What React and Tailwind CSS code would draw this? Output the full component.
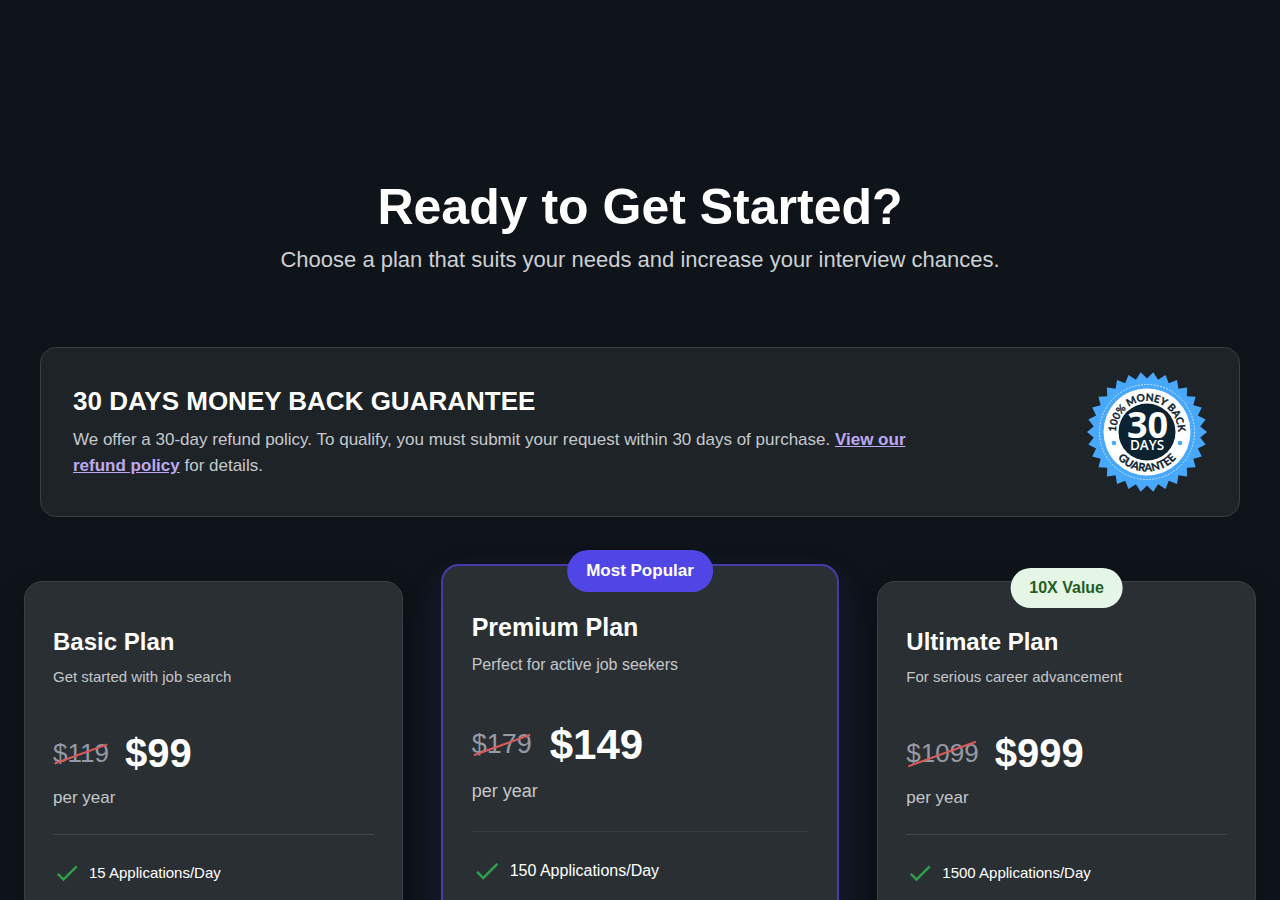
import clsx from "clsx";

const plans = [
  {
    name: "Basic Plan",
    description: "Get started with job search",
    oldPrice: "$119",
    price: "$99",
    features: ["15 Applications/Day"],
  },
  {
    name: "Premium Plan",
    description: "Perfect for active job seekers",
    oldPrice: "$179",
    price: "$149",
    features: ["150 Applications/Day"],
    badge: "Most Popular",
    featured: true,
  },
  {
    name: "Ultimate Plan",
    description: "For serious career advancement",
    oldPrice: "$1099",
    price: "$999",
    features: ["1500 Applications/Day"],
    badge: "10X Value",
  },
];

// 30 teeth, alternating outer and inner radius
const sealPoints = Array.from({ length: 60 }, (_, i) => {
  const radius = i % 2 === 0 ? 60 : 53.5;
  const angle = ((6 + i * 6) * Math.PI) / 180;
  const x = 60 + radius * Math.sin(angle);
  const y = 60 - radius * Math.cos(angle);
  return `${x.toFixed(2)},${y.toFixed(2)}`;
}).join(" ");

const GuaranteeSeal = () => (
  <svg
    viewBox="0 0 120 120"
    className="h-30 w-30 shrink-0"
    role="img"
    aria-label="30 days, 100% money back guarantee"
  >
    <defs>
      <path id="seal-top" d="M 29 60 A 31 31 0 0 1 91 60" />
      <path id="seal-bottom" d="M 20.5 60 A 39.5 39.5 0 0 0 99.5 60" />
    </defs>
    <polygon points={sealPoints} fill="#48a8fb" />
    <circle cx="60" cy="60" r="47.5" fill="none" stroke="#d9eeff" strokeWidth="0.9" strokeDasharray="1.8 1.4" />
    <circle cx="60" cy="60" r="43.5" fill="#fff" />
    <circle cx="60" cy="60" r="28.5" fill="#0c2231" />
    <circle cx="27" cy="71" r="2.3" fill="#48a8fb" />
    <circle cx="93" cy="71" r="2.3" fill="#48a8fb" />
    <g
      fill="#0c2231"
      stroke="#0c2231"
      strokeWidth="0.3"
      fontFamily="Lato, sans-serif"
      fontWeight="700"
      textAnchor="middle"
    >
      <text fontSize="10.3">
        <textPath href="#seal-top" startOffset="50%">
          100% MONEY BACK
        </textPath>
      </text>
      <text fontSize="11">
        <textPath href="#seal-bottom" startOffset="50%">
          GUARANTEE
        </textPath>
      </text>
    </g>
    <g fill="#fff" fontFamily="'Open Sans', sans-serif" textAnchor="middle">
      <text x="60.5" y="66" fontSize="36" fontWeight="700">
        30
      </text>
      <text x="60" y="78" fontSize="13.5" fontWeight="600">
        DAYS
      </text>
    </g>
  </svg>
);

const CheckIcon = ({ className }) => (
  <svg viewBox="0 0 24 24" className={className} fill="currentColor" aria-hidden="true">
    <path d="M9 16.17 4.83 12l-1.42 1.41L9 19 21 7l-1.41-1.41z" />
  </svg>
);

const PlanCard = ({ plan }) => {
  const { name, description, oldPrice, price, features, badge, featured } = plan;

  return (
    <article
      className={clsx(
        "relative rounded-[18px] bg-[#2a2f33] pt-11 pb-16",
        featured
          ? "-mx-[10px] -mt-[17px] border-2 border-[#463ba8] px-[29px] shadow-[0_16px_40px_rgba(79,70,229,0.13)]"
          : "border border-[#3b4045] px-7 shadow-[0_8px_24px_rgba(0,0,0,0.3)]"
      )}
    >
      {badge && (
        <span
          className={clsx(
            "absolute left-1/2 -translate-x-1/2 rounded-full px-[19px] font-bold whitespace-nowrap",
            featured
              ? "-top-4 bg-[#5046e5] text-[17px] leading-[42px] text-white"
              : "-top-[14px] bg-[#e6f6e6] text-base leading-10 text-[#1f5e24]"
          )}
        >
          {badge}
        </span>
      )}

      <h3
        className={clsx(
          "font-bold text-white",
          featured ? "text-[25px] leading-[34px]" : "text-2xl"
        )}
      >
        {name}
      </h3>
      <p
        className={clsx(
          "text-[#c4c7ca]",
          featured ? "mt-[9px] text-base" : "mt-2 text-[15px] leading-[22px]"
        )}
      >
        {description}
      </p>

      <div
        className={clsx(
          "flex items-center",
          featured ? "mt-[42px] h-[50px] gap-[18px]" : "mt-10 h-[50px] gap-4"
        )}
      >
        <span className={clsx("relative text-[#959aa5]", featured ? "text-[27px]" : "text-[26px]")}>
          {oldPrice}
          <span className="absolute inset-x-0 top-1/2 h-0.5 -rotate-20 bg-[#d95a5a]" />
        </span>
        <span className={clsx("font-bold text-white", featured ? "text-[42px]" : "text-[40px]")}>
          {price}
        </span>
      </div>
      <p
        className={clsx(
          "text-[#c4c7ca]",
          featured ? "mt-2 text-lg" : "mt-[7px] text-[17px] leading-[26px]"
        )}
      >
        per year
      </p>

      <hr className={clsx(featured ? "mt-[26px] border-[#363b40]" : "mt-[23px] border-[#42474c]")} />

      <ul className="mt-6 space-y-3">
        {features.map((feature) => (
          <li key={feature} className="flex items-center gap-2 text-white">
            <CheckIcon
              className={clsx("shrink-0 text-[#2fa04a]", featured ? "h-[30px] w-[30px]" : "h-7 w-7")}
            />
            <span className={featured ? "text-base" : "text-[15px] leading-6"}>{feature}</span>
          </li>
        ))}
      </ul>
    </article>
  );
};

const App = () => {
  return (
    <main className="min-h-screen bg-[#0f141a] pt-[176px] pb-24 font-['Liberation_Sans',Arial,sans-serif]">
      <header className="px-6 text-center">
        <h1 className="text-[50px] leading-[62px] font-bold text-white">Ready to Get Started?</h1>
        <p className="mt-1.5 text-[22px] leading-8 text-[#cdd0d3]">
          Choose a plan that suits your needs and increase your interview chances.
        </p>
      </header>

      <section className="mx-auto mt-[71px] max-w-[1280px] px-10">
        <div className="flex items-center justify-between gap-8 rounded-2xl border border-[#3a3f43] bg-[#1e2328] px-8 py-6">
          <div className="max-w-[860px]">
            <h2 className="text-[26px] leading-8 font-bold text-white">
              30 DAYS MONEY BACK GUARANTEE
            </h2>
            <p className="mt-[10px] text-[17px] leading-[26px] text-[#c6c9cc]">
              We offer a 30-day refund policy. To qualify, you must submit your request within 30
              days of purchase.{" "}
              <a href="#refund-policy" className="font-bold text-[#bda9f2] underline">
                View our refund policy
              </a>{" "}
              for details.
            </p>
          </div>
          <GuaranteeSeal />
        </div>
      </section>

      <section className="mx-auto mt-16 grid max-w-[1280px] grid-cols-3 gap-12 px-6">
        {plans.map((plan) => (
          <PlanCard key={plan.name} plan={plan} />
        ))}
      </section>
    </main>
  );
};

export default App;
